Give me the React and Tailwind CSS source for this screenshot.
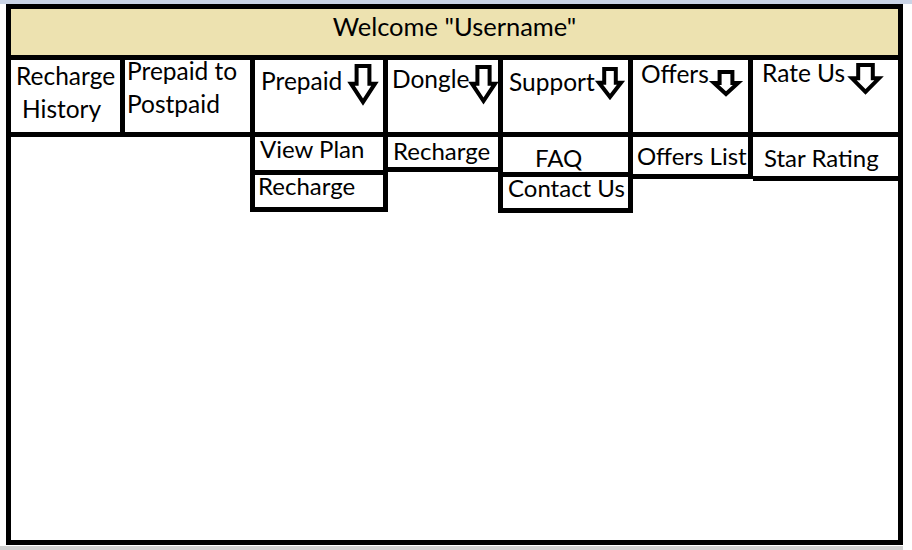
import React from "react";

function Arrow({ w, h, className = "" }) {
  const s = 4;
  const hs = s / 2;
  const sx1 = (w - w * 0.6) / 2;
  const sx2 = w - sx1;
  const hy = h * 0.48;
  const d = `M${sx1 + hs} ${hs} L${sx2 - hs} ${hs} L${sx2 - hs} ${hy} L${w - hs} ${hy} L${w / 2} ${h - hs - 1} L${hs} ${hy} L${sx1 + hs} ${hy} Z`;
  return (
    <svg width={w} height={h} viewBox={`0 0 ${w} ${h}`} className={`shrink-0 overflow-visible ${className}`}>
      <path d={d} fill="white" stroke="black" strokeWidth={s} strokeLinejoin="miter" />
    </svg>
  );
}

const B = "block whitespace-nowrap leading-[33px] text-black";
const H = `${B} text-[25.5px]`;
const T = `${B} text-[24.5px]`;
const S = `${B} text-[24px]`;

export default function App() {
  return (
    <div
      className="w-[912px] h-[550px] bg-white overflow-hidden flex flex-col"
      style={{ fontFamily: "Lato, 'Noto Sans', sans-serif" }}
    >
      <div className="h-[4px] bg-[#cad4e6] shrink-0" />
      <div className="ml-[6px] w-[897px] h-[541px] border-[5px] border-black flex flex-col shrink-0">
        {/* header */}
        <div className="h-[51px] bg-[#ede2b0] border-b-[5px] border-black text-center shrink-0">
          <span className={`${H} mt-[1px]`}>Welcome "Username"</span>
        </div>

        {/* main menu row */}
        <div className="h-[77px] border-b-[5px] border-black flex shrink-0">
          <div className="w-[114px] border-r-[5px] border-black pl-[5px]">
            <span className={`${T} -mt-[1px]`}>Recharge</span>
            <span className={`${T} pl-[6px]`}>History</span>
          </div>
          <div className="w-[130px] border-r-[5px] border-black pl-[2px]">
            <span className={`${T} -mt-[6px]`}>Prepaid to</span>
            <span className={T}>Postpaid</span>
          </div>
          <div className="w-[133px] border-r-[5px] border-black flex items-start pl-[6px]">
            <span className={`${T} mt-[4px]`}>Prepaid</span>
            <Arrow w={28} h={41} className="ml-auto mr-[6px] mt-[4px]" />
          </div>
          <div className="w-[115px] border-r-[5px] border-black flex items-start pl-[4px]">
            <span className={`${T} mt-[2px]`}>Dongle</span>
            <Arrow w={27} h={39} className="ml-auto mr-[1px] mt-[5px]" />
          </div>
          <div className="w-[130px] border-r-[5px] border-black flex items-start pl-[6px]">
            <span className={`${T} mt-[5px]`}>Support</span>
            <Arrow w={26} h={33} className="ml-auto mr-[5px] mt-[7px]" />
          </div>
          <div className="w-[120px] border-r-[5px] border-black flex items-start pl-[8px]">
            <span className={`${T} -mt-[3px]`}>Offers</span>
            <Arrow w={28} h={27} className="ml-auto mr-[8px] mt-[10px]" />
          </div>
          <div className="flex-1 flex items-start pl-[9px]">
            <span className={`${T} -mt-[4px]`}>Rate Us</span>
            <Arrow w={31} h={32} className="ml-auto mr-[17px] mt-[3px]" />
          </div>
        </div>

        {/* sub menus */}
        <div className="flex items-start">
          <div className="w-[239px] shrink-0" />
          <div className="w-[138px] shrink-0 border-x-[5px] border-black flex flex-col">
            <div className="h-[38px] border-b-[5px] border-black pl-[5px]">
              <span className={`${S} -mt-[5px]`}>View Plan</span>
            </div>
            <div className="h-[37px] border-b-[5px] border-black pl-[3px]">
              <span className={`${S} -mt-[6px]`}>Recharge</span>
            </div>
          </div>
          <div className="w-[115px] shrink-0 self-stretch border-r-[5px] border-black">
            <div className="h-[38px] border-b-[5px] border-black pl-[5px]">
              <span className={`${S} -mt-[3px]`}>Recharge</span>
            </div>
          </div>
          <div className="w-[130px] shrink-0 border-r-[5px] border-black flex flex-col">
            <div className="h-[40px] border-b-[5px] border-black pl-[32px]">
              <span className={`${S} mt-[4px]`}>FAQ</span>
            </div>
            <div className="h-[36px] border-b-[5px] border-black pl-[5px]">
              <span className={`${S} -mt-[6px]`}>Contact Us</span>
            </div>
          </div>
          <div className="w-[120px] shrink-0 border-r-[5px] border-black">
            <div className="h-[40px] border-b-[5px] border-black pl-[4px]">
              <span className={`${S} mt-[2px]`}>Offers List</span>
            </div>
          </div>
          <div className="flex-1">
            <div className="h-[40px] border-b-[5px] border-black pl-[11px]">
              <span className={`${S} mt-[4px]`}>Star Rating</span>
            </div>
          </div>
        </div>
      </div>
      <div className="mt-[1px] h-[4px] w-[903px] bg-[#d0d0d0] shrink-0" />
    </div>
  );
}
